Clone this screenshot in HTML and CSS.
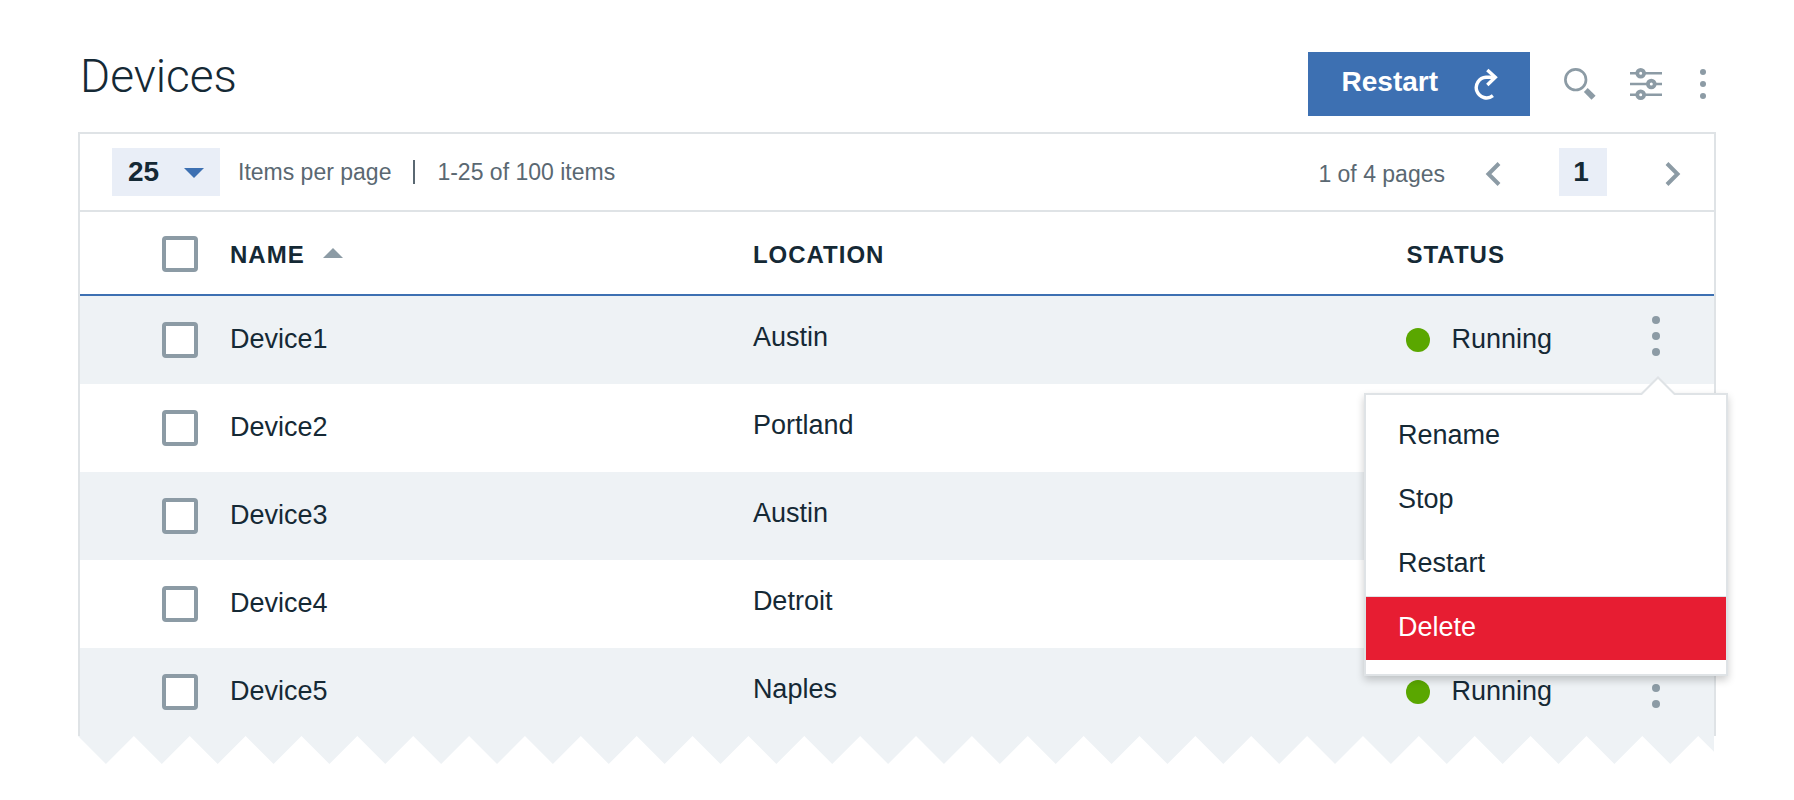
FILE: index.html
```html
<!DOCTYPE html>
<html lang="en">
<head>
<meta charset="utf-8">
<meta name="viewport" content="width=device-width, initial-scale=1">
<title>Devices</title>
<link rel="stylesheet" href="styles.css">
</head>
<body>
<svg class="sprite" aria-hidden="true">
  <symbol id="kebab" viewBox="0 0 8 40"><circle cx="4" cy="4" r="4"/><circle cx="4" cy="20" r="4"/><circle cx="4" cy="36" r="4"/></symbol>
</svg>
<main class="page">
  <header class="header">
    <h1 class="title">Devices</h1>
    <div class="actions">
      <button class="restart" type="button">
        <span class="restart-label">Restart</span>
        <svg width="24" height="32" viewBox="0 0 24 32" fill="none" stroke="currentColor" stroke-width="3.400" aria-hidden="true">
          <path d="M18.900 27.700A10.300 10.300 0 1 1 12 9.300H20.500"/>
          <path d="M13.300 2L21.300 9.300L13.300 17"/>
        </svg>
      </button>
      <button class="icon-button" type="button" aria-label="Search">
        <svg width="32" height="32" viewBox="0 0 32 32" aria-hidden="true">
          <circle cx="11.700" cy="11.700" r="10.300" fill="none" stroke="currentColor" stroke-width="2.700"/>
          <path fill="currentColor" d="M23.700 20L31.600 27.700L27.500 31.800L19.900 24Z"/>
        </svg>
      </button>
      <button class="icon-button" type="button" aria-label="Filter">
        <svg width="32" height="32" viewBox="0 0 32 32" fill="none" stroke="currentColor" aria-hidden="true">
          <path stroke-width="2.600" d="M0 5.300H7M14 5.300H32M0 16H18M25 16H32M0 26.700H7M14 26.700H32"/>
          <g stroke-width="3.800"><circle cx="10.700" cy="5.300" r="3.400"/><circle cx="21.300" cy="16" r="3.400"/><circle cx="10.700" cy="26.700" r="3.400"/></g>
        </svg>
      </button>
      <button class="icon-button more" type="button" aria-label="More options">
        <svg width="6" height="30" fill="currentColor" aria-hidden="true"><use href="#kebab"/></svg>
      </button>
    </div>
  </header>

  <section class="panel" aria-label="Device list">
    <div class="toolbar">
      <div class="size">
        <select class="size-select" id="page-size"><option>25</option><option>50</option></select>
        <svg class="size-arrow" width="20" height="10" viewBox="0 0 20 10" aria-hidden="true"><path d="M0 0H20L10 10Z"/></svg>
      </div>
      <label class="size-label" for="page-size">Items per page</label>
      <span class="divider"></span>
      <span>1-25 of 100 items</span>
      <nav class="pager" aria-label="Pagination">
        <label class="pages" for="page-number">1 of 4 pages</label>
        <button class="icon-button" type="button" aria-label="Previous page">
          <svg width="16" height="28" viewBox="0 -4 16 28" fill="none" stroke="currentColor" stroke-width="4" aria-hidden="true"><path d="M14 1.500L3.500 12L14 22.500"/></svg>
        </button>
        <input class="page-number" id="page-number" type="text" value="1">
        <button class="icon-button" type="button" aria-label="Next page">
          <svg width="16" height="28" viewBox="0 -4 16 28" fill="none" stroke="currentColor" stroke-width="4" aria-hidden="true"><path d="M2 1.500L12.500 12L2 22.500"/></svg>
        </button>
      </nav>
    </div>

    <table class="table">
      <colgroup><col class="col-check"><col class="col-name"><col class="col-location"><col><col class="col-menu"></colgroup>
      <thead>
        <tr>
          <th class="check-cell"><input class="check" type="checkbox" aria-label="Select all devices"></th>
          <th scope="col" aria-sort="ascending">NAME<svg class="sort" width="20" height="10" viewBox="0 0 20 10" aria-hidden="true"><path d="M0 10H20L10 0Z"/></svg></th>
          <th scope="col">LOCATION</th>
          <th scope="col">STATUS</th>
          <th></th>
        </tr>
      </thead>
      <tbody>
        <tr>
          <td class="check-cell"><input class="check" id="d1" type="checkbox"></td>
          <td class="name"><label for="d1">Device1</label></td>
          <td class="location">Austin</td>
          <td><span class="status"><span class="status-text">Running</span></span></td>
          <td class="menu-cell">
            <button class="icon-button" type="button" aria-label="Device1 actions" aria-expanded="true"><svg width="8" height="40" fill="currentColor" aria-hidden="true"><use href="#kebab"/></svg></button>
            <div class="menu" role="menu">
              <svg class="menu-arrow" width="36" height="20" viewBox="0 0 36 20" aria-hidden="true"><path class="menu-arrow-fill" d="M1 20V18.500L18 2.500L35 18.500V20Z"/><path class="menu-arrow-line" d="M0 19H1.500L18 2.500L34.500 19H36"/></svg>
              <button class="menu-item" type="button" role="menuitem">Rename</button>
              <button class="menu-item" type="button" role="menuitem">Stop</button>
              <button class="menu-item" type="button" role="menuitem">Restart</button>
              <button class="menu-item danger" type="button" role="menuitem">Delete</button>
            </div>
          </td>
        </tr>
        <tr>
          <td class="check-cell"><input class="check" id="d2" type="checkbox"></td>
          <td class="name"><label for="d2">Device2</label></td>
          <td class="location">Portland</td>
          <td></td>
          <td></td>
        </tr>
        <tr>
          <td class="check-cell"><input class="check" id="d3" type="checkbox"></td>
          <td class="name"><label for="d3">Device3</label></td>
          <td class="location">Austin</td>
          <td></td>
          <td></td>
        </tr>
        <tr>
          <td class="check-cell"><input class="check" id="d4" type="checkbox"></td>
          <td class="name"><label for="d4">Device4</label></td>
          <td class="location">Detroit</td>
          <td></td>
          <td></td>
        </tr>
        <tr>
          <td class="check-cell"><input class="check" id="d5" type="checkbox"></td>
          <td class="name"><label for="d5">Device5</label></td>
          <td class="location">Naples</td>
          <td><span class="status"><span class="status-text">Running</span></span></td>
          <td class="menu-cell">
            <button class="icon-button" type="button" aria-label="Device5 actions"><svg width="8" height="40" fill="currentColor" aria-hidden="true"><use href="#kebab"/></svg></button>
          </td>
        </tr>
      </tbody>
    </table>
  </section>
  <div class="torn">
    <svg class="torn-edge" viewBox="0 0 1634 28" preserveAspectRatio="none" aria-hidden="true">
      <path d="M0 0l27.900 28 27.900-28 27.900 28 27.900-28 27.900 28 27.900-28 27.900 28 27.900-28 27.900 28 27.900-28 27.900 28 27.900-28 27.900 28 27.900-28 27.900 28 27.900-28 27.900 28 27.900-28 27.900 28 27.900-28 27.900 28 27.900-28 27.900 28 27.900-28 27.900 28 27.900-28 27.900 28 27.900-28 27.900 28 27.900-28 27.900 28 27.900-28 27.900 28 27.900-28 27.900 28 27.900-28 27.900 28 27.900-28 27.900 28 27.900-28 27.900 28 27.900-28 27.900 28 27.900-28 27.900 28 27.900-28 27.900 28 27.900-28 27.900 28 27.900-28 27.900 28 27.900-28 27.900 28 27.900-28 27.900 28 27.900-28 27.900 28 27.900-28 27.900 28 27.900-28L1634 28V0Z"/>
    </svg>
  </div>
</main>
</body>
</html>
```
FILE: styles.css
```css
:root {
  --ink: #152935;
  --ink-soft: #5a6872;
  --icon: #8c9ba5;
  --line: #dfe3e6;
  --blue: #3d70b2;
  --field: #e9eef7;
  --stripe: #eef2f5;
}

* { box-sizing: border-box; }

body {
  margin: 0;
  background: #fff;
  color: var(--ink);
  font: 27px/32px "Liberation Sans", Arial, sans-serif;
}

button, input, select {
  margin: 0;
  padding: 0;
  border: 0;
  color: inherit;
  font: inherit;
}

svg { display: block; flex: none; }
.sprite { position: absolute; width: 0; height: 0; }

.page { padding: 52px 78px 0; }

.header {
  display: flex;
  justify-content: space-between;
  align-items: flex-start;
  margin-bottom: 16px;
}

.title {
  margin: 0;
  padding-left: 2px;
  font: 300 46px/48px Roboto, "Liberation Sans", sans-serif;
}

.actions {
  display: flex;
  align-items: center;
  gap: 34px;
  padding-right: 10px;
}

.restart {
  display: flex;
  align-items: center;
  gap: 36px;
  padding: 16px 32px 16px 34px;
  background: var(--blue);
  color: #fff;
  font-size: 28px;
  font-weight: 700;
}

.restart-label { padding-bottom: 4px; line-height: 28px; }

.icon-button {
  display: inline-flex;
  background: none;
  color: var(--icon);
}

.more { margin-left: 4px; }

.panel {
  border: 2px solid var(--line);
  border-bottom: 0;
}

.toolbar {
  display: flex;
  align-items: center;
  padding: 14px 33px 14px 32px;
  border-bottom: 2px solid var(--line);
  color: var(--ink-soft);
  font-size: 23px;
}

.size { position: relative; }

.size-select {
  display: block;
  width: 108px;
  height: 48px;
  padding-left: 16px;
  border-radius: 0;
  background: var(--field);
  color: var(--ink);
  font-size: 28px;
  font-weight: 700;
  appearance: none;
}

.size-arrow {
  position: absolute;
  top: 20px;
  right: 16px;
  fill: var(--blue);
  pointer-events: none;
}

.size-label { margin-left: 18px; }

.divider {
  width: 2px;
  height: 24px;
  margin: 0 22px;
  background: var(--ink-soft);
}

.pager {
  display: flex;
  align-items: center;
  gap: 58px;
  margin-left: auto;
}

.pages { margin-right: -18px; padding-top: 4px; }

.page-number {
  width: 48px;
  height: 48px;
  padding-right: 4px;
  background: var(--field);
  color: var(--ink);
  font-size: 28px;
  font-weight: 700;
  text-align: center;
}

.table {
  width: 100%;
  border-collapse: separate;
  border-spacing: 0;
  table-layout: fixed;
}

.col-check { width: 150px; }
.col-name { width: 32%; }
.col-location { width: 40%; }
.col-menu { width: 116px; }

th, td {
  padding: 0;
  text-align: left;
  vertical-align: middle;
}

th {
  height: 84px;
  padding-top: 4px;
  border-bottom: 2px solid var(--blue);
  font-size: 24px;
  letter-spacing: 1px;
}

td { height: 88px; }
tbody tr:nth-child(odd) { background: var(--stripe); }

.check-cell { padding-top: 0; padding-left: 82px; }
th.check-cell { padding-top: 2px; }

.check {
  display: block;
  width: 36px;
  height: 36px;
  border: 4px solid var(--icon);
  border-radius: 4px;
  background: #fff;
  appearance: none;
}

.check:checked { background: var(--blue); }

.sort {
  display: inline-block;
  margin-left: 18px;
  vertical-align: 5px;
  fill: var(--icon);
}

.name { padding-bottom: 2px; }
.location { padding-bottom: 6px; }

.status {
  display: flex;
  align-items: center;
  gap: 21px;
}

.status::before {
  width: 24px;
  height: 24px;
  border-radius: 50%;
  background: #5aa700;
  content: "";
}

.status-text { padding-bottom: 2px; }

.menu-cell {
  position: relative;
  padding-bottom: 8px;
  text-align: center;
}

.menu-cell > .icon-button { vertical-align: middle; }

.menu {
  position: absolute;
  top: 97px;
  right: -14px;
  z-index: 1;
  width: 364px;
  padding: 9px 0 14px;
  border: 2px solid var(--line);
  background: #fff;
  box-shadow: 0 4px 8px rgba(0, 0, 0, 0.2);
}

.menu-arrow {
  position: absolute;
  top: -20px;
  right: 50px;
}

.menu-arrow-fill { fill: #fff; }
.menu-arrow-line { fill: none; stroke: var(--line); stroke-width: 2; }

.menu-item {
  display: block;
  width: 100%;
  padding: 15px 32px 17px;
  background: none;
  text-align: left;
}

.danger {
  padding-top: 14px;
  border-top: 1px solid var(--line);
  background: #e71d32;
  color: #fff;
}

.torn { padding-right: 2px; }

.torn-edge {
  width: 100%;
  height: 28px;
  fill: var(--stripe);
}
```
